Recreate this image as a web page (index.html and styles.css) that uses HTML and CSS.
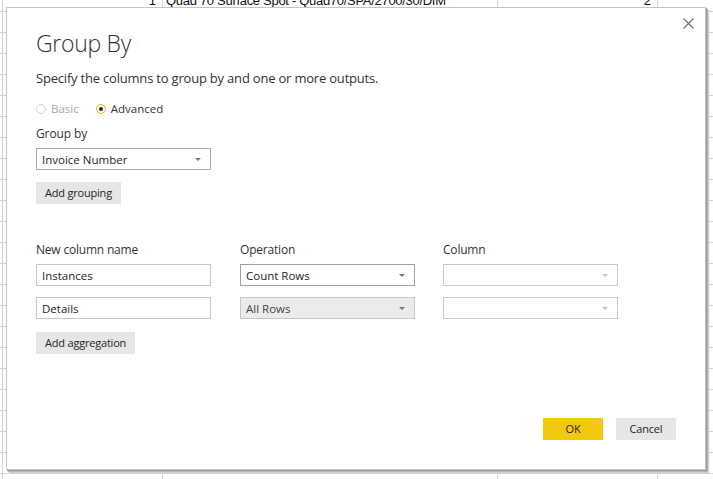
FILE: index.html
```html
<!DOCTYPE html>
<html>
<head>
<meta charset="utf-8">
<link rel="stylesheet" href="styles.css">
</head>
<body>
<div class="sheet">
  <div class="sheet-row">
    <div class="cell cell-num">1</div>
    <div class="cell cell-text">Quad 70 Surface Spot - Quad70/SPA/2700/30/DIM</div>
    <div class="cell cell-num2">2</div>
  </div>
</div>

<div class="dialog">
  <button class="close" aria-label="Close">
    <svg width="11" height="11" viewBox="0 0 11 11"><path d="M0.5 0.5L10.5 10.5M10.5 0.5L0.5 10.5" stroke="#707070" stroke-width="1.1" fill="none"/></svg>
  </button>
  <h1 class="title">Group By</h1>
  <p class="desc">Specify the columns to group by and one or more outputs.</p>
  <div class="radios">
    <label class="radio disabled"><span class="circle"></span>Basic</label>
    <label class="radio checked"><span class="circle"><span class="dot"></span></span>Advanced</label>
  </div>
  <div class="label">Group by</div>
  <div class="select"><span>Invoice Number</span><span class="caret"></span></div>
  <button class="btn btn-grouping">Add grouping</button>

  <div class="agg">
    <div class="agg-head">New column name</div>
    <div class="agg-head">Operation</div>
    <div class="agg-head">Column</div>

    <div class="input">Instances</div>
    <div class="select select-dark"><span>Count Rows</span><span class="caret"></span></div>
    <div class="select select-light"><span></span><span class="caret caret-light"></span></div>

    <div class="input">Details</div>
    <div class="select select-filled"><span>All Rows</span><span class="caret"></span></div>
    <div class="select select-light"><span></span><span class="caret caret-light"></span></div>
  </div>
  <button class="btn btn-agg">Add aggregation</button>

  <div class="footer">
    <button class="btn btn-ok">OK</button>
    <button class="btn btn-cancel">Cancel</button>
  </div>
</div>
</body>
</html>
```

FILE: styles.css
```css
html, body {
  margin: 0;
  padding: 0;
  overflow: hidden;
  background: #ffffff;
}

.sheet {
  margin-top: -9px;
  height: 500px;
  background-image:
    linear-gradient(to right, transparent 2px, #d4d4d4 2px 3px, transparent 3px 162px, #d4d4d4 162px 163px, transparent 163px 497px, #d4d4d4 497px 498px, transparent 498px 657px, #d4d4d4 657px 658px, transparent 658px),
    linear-gradient(to bottom, transparent 20px, #d4d4d4 20px 21px);
  background-size: 100% 100%, 100% 21px;
  background-repeat: no-repeat, repeat-y;
  font-family: "Liberation Sans", Arial, sans-serif;
  font-size: 13px;
  color: #111;
}

.sheet-row {
  display: grid;
  grid-template-columns: 3px 159px 1px 334px 1px 159px;
  height: 21px;
  line-height: 20px;
}

.cell-num { grid-column: 2; text-align: right; padding-right: 6px; }
.cell-text { grid-column: 4; padding-left: 3px; white-space: nowrap; letter-spacing: -0.3px; }
.cell-num2 { grid-column: 6; text-align: right; padding-right: 6px; }

.dialog {
  position: absolute;
  left: 6px;
  top: 7px;
  width: 700px;
  height: 463px;
  box-sizing: border-box;
  background: #ffffff;
  border: 1px solid #c4c4c4;
  box-shadow: 1px 1px 0 #9a9a9a, 2px 2px 0 #b4b4b4, 3px 3px 1px #d0d0d0;
  padding: 19px 29px 29px 29px;
  display: flex;
  flex-direction: column;
  align-items: flex-start;
  font-family: "Open Sans", "Noto Sans", sans-serif;
  color: #333333;
}

.close {
  position: absolute;
  top: 7px;
  right: 8px;
  width: 17px;
  height: 17px;
  padding: 3px;
  border: 0;
  background: transparent;
  display: flex;
  align-items: center;
  justify-content: center;
}

.title {
  margin: 0;
  font-size: 23px;
  line-height: 32px;
  font-weight: 300;
  color: #333;
  letter-spacing: -0.3px;
}

.desc {
  margin: 10px 0 0 0;
  font-size: 13px;
  line-height: 18px;
  letter-spacing: -0.2px;
}

.radios {
  margin-top: 14px;
  display: flex;
  gap: 17px;
  font-size: 11.5px;
  line-height: 16px;
}

.radio {
  display: flex;
  align-items: center;
  gap: 5px;
}

.radio .circle {
  width: 10px;
  height: 10px;
  box-sizing: border-box;
  border-radius: 50%;
  border: 1px solid #d0d0d0;
  display: flex;
  align-items: center;
  justify-content: center;
  background: #fff;
}

.radio.disabled { color: #a6a6a6; }
.radio.checked .circle { border-color: #e8b800; }
.radio .dot {
  width: 4px;
  height: 4px;
  border-radius: 50%;
  background: #222;
}

.label {
  margin-top: 8px;
  font-size: 12px;
  line-height: 18px;
  letter-spacing: -0.1px;
}

.select, .input {
  box-sizing: border-box;
  width: 175px;
  height: 22px;
  border: 1px solid #c6c6c6;
  background: #fff;
  display: flex;
  align-items: center;
  justify-content: space-between;
  padding: 0 9px 0 5px;
  font-size: 11.5px;
  color: #252525;
}

.label + .select {
  margin-top: 5px;
  border-color: #ababab;
}

.caret {
  width: 0;
  height: 0;
  border-left: 3px solid transparent;
  border-right: 3px solid transparent;
  border-top: 3px solid #777;
}
.caret-light { border-top-color: #c4c4c4; }

.select-dark { border-color: #a0a0a0; }
.select-filled { background: #ebebeb; border-color: #c6c6c6; color: #444; }
.select-light { border-color: #c8c8c8; }

.btn {
  border: 0;
  background: #e6e6e6;
  font-family: "Open Sans", "Noto Sans", sans-serif;
  font-size: 11px;
  color: #252525;
  height: 22px;
  padding: 0 9px;
  line-height: 22px;
  letter-spacing: -0.2px;
}

.btn-grouping { margin-top: 12px; }

.agg {
  margin-top: 37px;
  display: grid;
  grid-template-columns: 204px 203px 175px;
  font-size: 12px;
}

.agg-head {
  line-height: 18px;
  margin-bottom: 5px;
  letter-spacing: -0.2px;
}

.agg .input, .agg .select { margin-bottom: 11px; }

.btn-agg { margin-top: 2px; }

.footer {
  margin-top: auto;
  align-self: flex-end;
  display: flex;
  gap: 13px;
}

.btn-ok {
  width: 60px;
  background: #f2c811;
  padding: 0;
}

.btn-cancel {
  width: 60px;
  padding: 0;
}
```
